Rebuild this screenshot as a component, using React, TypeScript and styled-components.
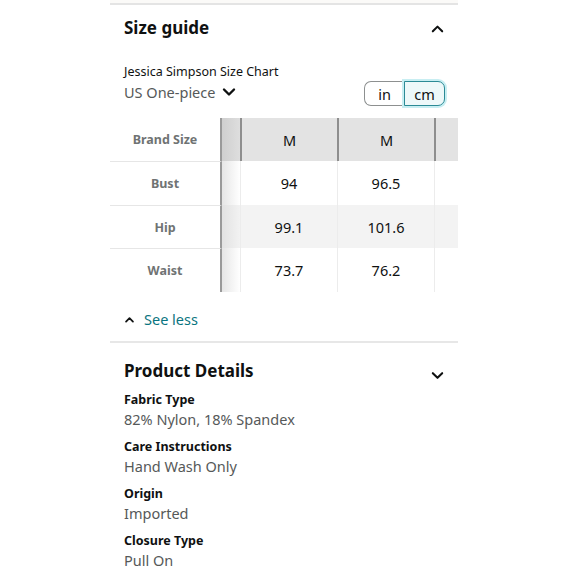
import React from "react";
import styled, { createGlobalStyle } from "styled-components";

const Global = createGlobalStyle`
  html, body { margin: 0; padding: 0; background: #ffffff; }
  body { font-family: "Noto Sans", "Open Sans", Arial, sans-serif; color: #0f1111; }
  * { box-sizing: border-box; }
`;

const Page = styled.div`
  width: 348px;
  margin-left: 110px;
`;

const TopRule = styled.div`
  height: 5px;
  border-bottom: 2px solid #e4e4e4;
  background: #fbfaf8;
`;

const Section = styled.section`
  padding: 0 13px 0 14px;
`;

const SectionHeader = styled.div<{ $top: number }>`
  display: flex;
  align-items: center;
  justify-content: space-between;
  margin-top: ${(p) => p.$top}px;
  height: 26px;
`;

const Title = styled.h2`
  margin: 0;
  font-size: 17px;
  font-weight: 700;
  line-height: 26px;
  color: #0f1111;
`;

const Chevron = styled.svg<{ $dy?: number }>`
  width: 15px;
  height: 15px;
  margin-top: ${(p) => p.$dy ?? 0}px;
  flex: none;
`;

const ChartRow = styled.div`
  display: flex;
  align-items: flex-end;
  justify-content: space-between;
  margin-top: 22px;
`;

const ChartInfo = styled.div`
  display: flex;
  flex-direction: column;
`;

const ChartName = styled.div`
  font-size: 12.5px;
  line-height: 18px;
  color: #0f1111;
`;

const ChartSelect = styled.div`
  display: flex;
  align-items: center;
  gap: 6px;
  font-size: 14.5px;
  line-height: 22px;
  color: #565959;
  margin-top: 0;
`;

const Toggle = styled.div`
  display: flex;
  margin-bottom: -3px;
`;

const ToggleButton = styled.div<{ $active?: boolean; $side: "left" | "right" }>`
  height: 25px;
  width: ${(p) => (p.$side === "left" ? 40 : 41)}px;
  display: flex;
  align-items: center;
  justify-content: center;
  font-size: 14.5px;
  color: #0f1111;
  background: ${(p) => (p.$active ? "#edf8f9" : "#ffffff")};
  border: ${(p) => (p.$active ? "1.5px solid #2b8a95" : "1px solid #8d9090")};
  border-radius: ${(p) => (p.$side === "left" ? "7px 0 0 7px" : "0 7px 7px 0")};
  box-shadow: ${(p) => (p.$active ? "0 0 0 2px #c8eef2" : "none")};
  border-right: ${(p) => (p.$side === "left" ? "none" : undefined)};
`;

const Table = styled.div`
  display: grid;
  grid-template-columns: 112px 18px 97px 97px 1fr;
  grid-template-rows: 43px 44px 43px 44px;
  margin-top: 15px;
`;

type CellKind = "label" | "stub" | "data" | "edge";

const Cell = styled.div<{ $kind: CellKind; $header?: boolean; $shaded?: boolean; $ruled?: boolean }>`
  display: flex;
  align-items: center;
  justify-content: center;
  font-size: ${(p) => (p.$kind === "label" ? "12.5px" : "14.5px")};
  font-weight: ${(p) => (p.$kind === "label" ? 700 : 400)};
  color: ${(p) => (p.$kind === "label" ? "#6f7373" : "#0f1111")};
  background: ${(p) =>
    p.$kind === "label"
      ? "#ffffff"
      : p.$kind === "stub"
      ? p.$header
        ? "linear-gradient(90deg, #cfcfcf, #dedede)"
        : p.$shaded
        ? "linear-gradient(90deg, #e2e2e2, #f2f2f2)"
        : "linear-gradient(90deg, #e6e6e6, #ffffff)"
      : p.$header
      ? "#e3e3e3"
      : p.$shaded
      ? "#f3f3f3"
      : "#ffffff"};
  border-right: ${(p) => (p.$kind === "label" ? "2px solid #9a9a9a" : "none")};
  border-left: ${(p) =>
    p.$kind === "data" || p.$kind === "edge"
      ? p.$header
        ? "2px solid #8e8e8e"
        : "1px solid #ececec"
      : "none"};
  border-top: ${(p) => (p.$kind === "label" && p.$ruled ? "1px solid #e6e6e6" : "none")};
`;

const SeeLess = styled.div`
  display: flex;
  align-items: center;
  gap: 9px;
  padding-left: 14px;
  margin-top: 16px;
  height: 22px;
  font-size: 14.5px;
  color: #0a7480;
`;

const Divider = styled.div`
  height: 2px;
  background: #e7e7e7;
  margin-top: 11px;
`;

const DetailList = styled.dl`
  margin: 6px 0 0 0;
  display: flex;
  flex-direction: column;
  gap: 7px;
`;

const DetailItem = styled.div`
  display: flex;
  flex-direction: column;
`;

const DetailLabel = styled.dt`
  font-size: 12.5px;
  font-weight: 700;
  line-height: 19px;
  color: #0f1111;
`;

const DetailValue = styled.dd`
  margin: 0;
  font-size: 14.5px;
  line-height: 21px;
  color: #565959;
`;

const ChevronUp = ({ size = 15, dy = 0, stroke = 2.2 }: { size?: number; dy?: number; stroke?: number }) => (
  <Chevron viewBox="0 0 16 16" $dy={dy} style={{ width: size, height: size }}>
    <path d="M3 11 L8 6 L13 11" fill="none" stroke="#0f1111" strokeWidth={stroke} strokeLinecap="round" strokeLinejoin="round" />
  </Chevron>
);

const ChevronDown = ({ size = 15, dy = 0, stroke = 2.2 }: { size?: number; dy?: number; stroke?: number }) => (
  <Chevron viewBox="0 0 16 16" $dy={dy} style={{ width: size, height: size }}>
    <path d="M3 5.5 L8 10.5 L13 5.5" fill="none" stroke="#0f1111" strokeWidth={stroke} strokeLinecap="round" strokeLinejoin="round" />
  </Chevron>
);

const rows = [
  { label: "Brand Size", values: ["M", "M"], header: true, shaded: false },
  { label: "Bust", values: ["94", "96.5"], header: false, shaded: false },
  { label: "Hip", values: ["99.1", "101.6"], header: false, shaded: true },
  { label: "Waist", values: ["73.7", "76.2"], header: false, shaded: false },
];

const details = [
  { label: "Fabric Type", value: "82% Nylon, 18% Spandex" },
  { label: "Care Instructions", value: "Hand Wash Only" },
  { label: "Origin", value: "Imported" },
  { label: "Closure Type", value: "Pull On" },
];

export default function App() {
  return (
    <>
      <Global />
      <Page>
        <TopRule />
        <Section>
          <SectionHeader $top={10}>
            <Title>Size guide</Title>
            <ChevronUp />
          </SectionHeader>
          <ChartRow>
            <ChartInfo>
              <ChartName>Jessica Simpson Size Chart</ChartName>
              <ChartSelect>
                US One-piece
                <ChevronDown size={16} stroke={2.4} />
              </ChartSelect>
            </ChartInfo>
            <Toggle>
              <ToggleButton $side="left">in</ToggleButton>
              <ToggleButton $side="right" $active>
                cm
              </ToggleButton>
            </Toggle>
          </ChartRow>
        </Section>
        <Table>
          {rows.map((r, i) => (
            <React.Fragment key={r.label}>
              <Cell $kind="label" $ruled={i > 0}>
                {r.label}
              </Cell>
              <Cell $kind="stub" $header={r.header} $shaded={r.shaded} />
              {r.values.map((v, j) => (
                <Cell key={j} $kind="data" $header={r.header} $shaded={r.shaded}>
                  {v}
                </Cell>
              ))}
              <Cell $kind="edge" $header={r.header} $shaded={r.shaded} />
            </React.Fragment>
          ))}
        </Table>
        <SeeLess>
          <ChevronUp size={11} stroke={2.6} />
          See less
        </SeeLess>
        <Divider />
        <Section>
          <SectionHeader $top={15}>
            <Title>Product Details</Title>
            <ChevronDown dy={8} />
          </SectionHeader>
          <DetailList>
            {details.map((d) => (
              <DetailItem key={d.label}>
                <DetailLabel>{d.label}</DetailLabel>
                <DetailValue>{d.value}</DetailValue>
              </DetailItem>
            ))}
          </DetailList>
        </Section>
      </Page>
    </>
  );
}
